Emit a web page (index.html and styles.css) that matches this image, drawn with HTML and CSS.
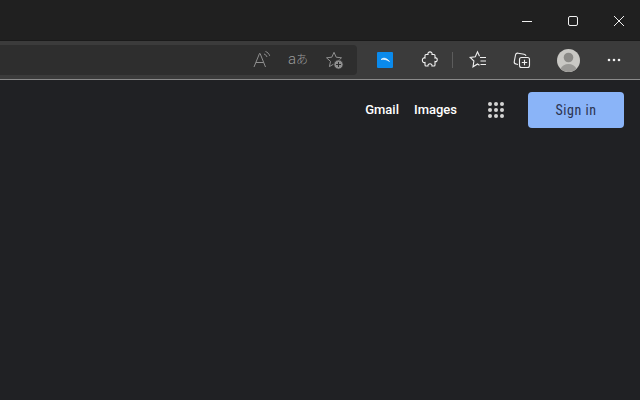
FILE: index.html
```html
<!DOCTYPE html>
<html lang="en">
<head>
<meta charset="utf-8">
<title>Browser</title>
<link rel="stylesheet" href="styles.css">
</head>
<body>
<header class="titlebar">
  <button class="win-btn" aria-label="Minimize"><svg width="12" height="12" viewBox="0 0 12 12"><path d="M1 6.500h10" stroke="#f0f0f0" fill="none"/></svg></button>
  <button class="win-btn" aria-label="Maximize"><svg width="12" height="12" viewBox="0 0 12 12"><rect x="1.500" y="1.500" width="9" height="9" rx="1.500" stroke="#f0f0f0" fill="none"/></svg></button>
  <button class="win-btn" aria-label="Close"><svg width="12" height="12" viewBox="0 0 12 12"><path d="M1 1l10 10M11 1L1 11" stroke="#f0f0f0" fill="none"/></svg></button>
</header>
<nav class="toolbar">
  <div class="address">
    <svg class="addr-icon" width="20" height="20" viewBox="0 0 20 20" fill="none" stroke="#8f8f8f"><path d="M2 17L7.500 3.500h.6L13.500 17M4 12.500h7.500"/><path d="M12 4c1.500.5 2.500 1.500 3 3M13.500 1.500c2 .7 3.500 2.200 4.200 4.300"/></svg>
    <span class="translate"><span class="t-a">a</span><span class="t-j">あ</span></span>
    <svg class="addr-icon" width="20" height="20" viewBox="0 0 20 20" fill="none" stroke="#8f8f8f"><path d="M10 2.300l2.200 4.900 5.300.6-4 3.600 1.100 5.200-4.600-2.700-4.600 2.700 1.100-5.200-4-3.600 5.300-.6z"/><circle cx="14.500" cy="14.500" r="4.700" fill="#8f8f8f" stroke="#2e2e2e"/><path d="M14.500 12v5M12 14.500h5" stroke="#2e2e2e"/></svg>
  </div>
  <span class="ext-blue"><svg width="16" height="16" viewBox="0 0 16 16"><rect width="16" height="16" rx="1" fill="#0a8aec"/><path d="M4 7.500C6.500 5.300 9.500 5.800 12.500 9.500 9.500 7.500 7 7 4 7.500z" fill="#fff" stroke="#fff" stroke-width=".6"/></svg></span>
  <svg class="tool-icon puzzle" width="18" height="18" viewBox="0 0 18 18" fill="none" stroke="#f0f0f0" stroke-width="1.100"><path d="M8 3.500C7 0 13 0 12 3.500H14c.6 0 1 .4 1 1V7c3-1 3 4.500 0 3.500V14c0 .6-.4 1-1 1H12c.6-3-4.600-3-4 0H6c-.6 0-1-.4-1-1V11.500C1.500 12.500 1.500 6 5 7V4.500c0-.6.400-1 1-1z"/></svg>
  <span class="divider"></span>
  <svg class="tool-icon star-list" width="20" height="20" viewBox="0 0 20 20" fill="none" stroke="#f0f0f0" stroke-width="1.100"><path d="M11.500 6.300L9.500 1.800 7.300 6.800 2.200 7.500 5.900 11 5 16.800l4.500-2.800 2 1.200"/><path d="M12 7.500h6M12.500 11h5.500M12.500 14.500h5.500"/></svg>
  <svg class="tool-icon collections" width="20" height="20" viewBox="0 0 20 20" fill="none" stroke="#f0f0f0" stroke-width="1.100"><path d="M6 14.500L4 14C2.800 13.700 2 12.500 2.300 11.300L3.500 5c.3-1.200 1.400-2 2.600-1.800l6 1c1 .2 1.700.8 1.900 1.700"/><rect x="7.500" y="7.500" width="10" height="10" rx="2"/><path d="M12.500 9.800v5.400M9.800 12.500h5.400"/></svg>
  <span class="avatar"><svg width="23" height="23" viewBox="0 0 23 23"><circle cx="11.500" cy="11.500" r="11.500" fill="#c9c8c4"/><circle cx="11.500" cy="8.500" r="4.800" fill="#8b8a87"/><path d="M3.500 19.800C5 16.500 8 15 11.500 15s6.500 1.500 8 4.800A11.500 11.500 0 0 1 3.500 19.800z" fill="#9a9996"/></svg></span>
  <svg class="tool-icon more" width="14" height="4" viewBox="0 0 14 4" fill="#f0f0f0"><circle cx="2" cy="2" r="1.300"/><circle cx="7" cy="2" r="1.300"/><circle cx="12" cy="2" r="1.300"/></svg>
</nav>
<main class="page">
  <div class="google-bar">
    <a class="link">Gmail</a>
    <a class="link">Images</a>
    <svg class="apps" width="16" height="16" viewBox="0 0 16 16" fill="#d4d4d4"><circle cx="2" cy="2" r="2"/><circle cx="8" cy="2" r="2"/><circle cx="14" cy="2" r="2"/><circle cx="2" cy="8" r="2"/><circle cx="8" cy="8" r="2"/><circle cx="14" cy="8" r="2"/><circle cx="2" cy="14" r="2"/><circle cx="8" cy="14" r="2"/><circle cx="14" cy="14" r="2"/></svg>
    <button class="signin">Sign in</button>
  </div>
</main>
</body>
</html>
```

FILE: styles.css
```css
* { box-sizing: border-box; }
html, body { margin: 0; height: 100%; }
body {
  width: 640px;
  height: 400px;
  overflow: hidden;
  background: #202124;
  font-family: Roboto, sans-serif;
  display: flex;
  flex-direction: column;
}
.titlebar {
  height: 41px;
  flex: none;
  background: #202020;
  border-bottom: 1px solid #1a1a1a;
  display: flex;
  justify-content: flex-end;
}
.win-btn {
  width: 46px;
  height: 40px;
  padding: 2px 0 0 4px;
  border: 0;
  background: none;
  display: flex;
  align-items: center;
  justify-content: center;
}
.toolbar {
  height: 39px;
  flex: none;
  background: #3b3b3b;
  border-bottom: 1px solid #8a8a8a;
  display: flex;
  align-items: center;
}
.address {
  width: 357px;
  height: 30px;
  flex: none;
  background: #2e2e2e;
  border-radius: 0 4px 4px 0;
  display: flex;
  align-items: center;
  justify-content: flex-end;
  gap: 16px;
  padding-right: 13px;
}
.translate {
  width: 20px;
  display: flex;
  align-items: baseline;
  color: #9a9a9a;
  font-family: "Noto Sans CJK JP", "Noto Sans", sans-serif;
  line-height: 20px;
  margin-top: -2px;
}
.t-a { font-family: Roboto, sans-serif; font-weight: 300; font-size: 15px; }
.t-j { font-size: 12px; font-weight: 300; }
.ext-blue { margin-left: 20px; width: 16px; height: 16px; display: flex; }
.tool-icon { flex: none; }
.puzzle { margin-left: 27px; }
.divider { width: 1px; height: 16px; background: #5c5c5c; margin-left: 14px; }
.star-list { margin-left: 15px; }
.collections { margin-left: 24px; }
.avatar { margin-left: 25px; width: 23px; height: 23px; display: flex; }
.more { margin-left: 27px; }
.page { flex: 1; }
.google-bar {
  height: 56px;
  display: flex;
  align-items: center;
  justify-content: flex-end;
  padding: 3px 16px 0 0;
}
.link {
  color: #fff;
  font-size: 13px;
  font-weight: 500;
  margin-right: 15px;
  line-height: 20px;
}
.apps { margin: 0 24px 0 16px; }
.signin {
  width: 96px;
  height: 36px;
  border: 0;
  border-radius: 4px;
  background: #8ab4f8;
  color: #2a3350;
  font-family: Roboto, sans-serif;
  font-size: 14px;
  font-stretch: 80%;
  font-weight: 400;
  letter-spacing: .5px;
  padding: 0;
}
```
